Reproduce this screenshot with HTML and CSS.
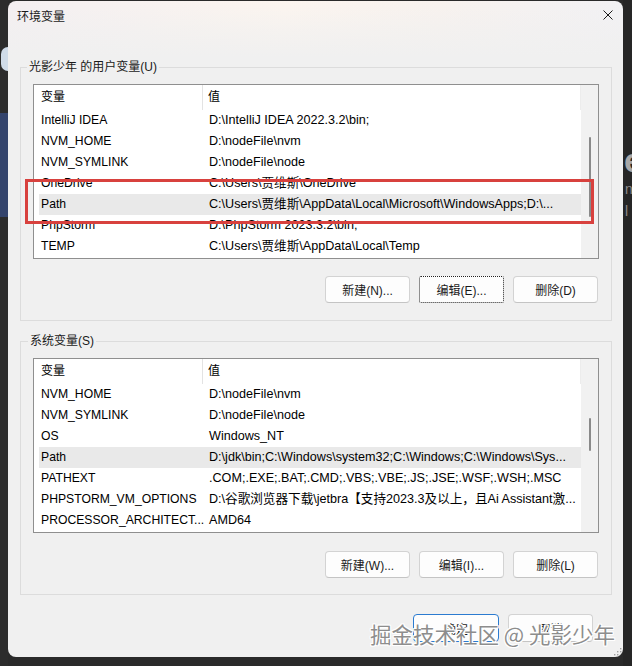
FILE: index.html
```html
<!DOCTYPE html>
<html lang="zh-CN">
<head>
<meta charset="utf-8">
<title>环境变量</title>
<link rel="stylesheet" href="styles.css">
</head>
<body>
<div class="desk">
  <div class="edge-left">
    <div class="edge-icon"></div>
    <div class="edge-blue"></div>
  </div>
  <div class="window">
    <div class="titlebar">
      <span class="title">环境变量</span>
      <svg class="close" width="10" height="10" viewBox="0 0 10 10"><path d="M0.5 0.5L9.5 9.5M9.5 0.5L0.5 9.5" stroke="#1a1a1a" stroke-width="1" fill="none"/></svg>
    </div>
    <div class="main">
      <fieldset class="group">
        <legend>光影少年 的用户变量(U)</legend>
        <div class="list">
          <div class="list-body">
            <div class="head"><div class="c1">变量</div><div class="c2">值</div></div>
            <div class="row"><div class="c1">IntelliJ IDEA</div><div class="c2">D:\IntelliJ IDEA 2022.3.2\bin;</div></div>
            <div class="row"><div class="c1">NVM_HOME</div><div class="c2">D:\nodeFile\nvm</div></div>
            <div class="row"><div class="c1">NVM_SYMLINK</div><div class="c2">D:\nodeFile\node</div></div>
            <div class="row"><div class="c1">OneDrive</div><div class="c2">C:\Users\贾维斯\OneDrive</div></div>
            <div class="row sel"><div class="c1">Path</div><div class="c2">C:\Users\贾维斯\AppData\Local\Microsoft\WindowsApps;D:\...</div></div>
            <div class="row"><div class="c1">PhpStorm</div><div class="c2">D:\PhpStorm 2023.3.2\bin;</div></div>
            <div class="row"><div class="c1">TEMP</div><div class="c2">C:\Users\贾维斯\AppData\Local\Temp</div></div>
          </div>
          <div class="scroll"><div class="thumb thumb-user"></div></div>
        </div>
        <div class="actions">
          <button class="btn">新建(N)...</button>
          <button class="btn focus">编辑(E)...</button>
          <button class="btn">删除(D)</button>
        </div>
      </fieldset>
      <fieldset class="group group-sys">
        <legend>系统变量(S)</legend>
        <div class="list">
          <div class="list-body">
            <div class="head"><div class="c1">变量</div><div class="c2">值</div></div>
            <div class="row"><div class="c1">NVM_HOME</div><div class="c2">D:\nodeFile\nvm</div></div>
            <div class="row"><div class="c1">NVM_SYMLINK</div><div class="c2">D:\nodeFile\node</div></div>
            <div class="row"><div class="c1">OS</div><div class="c2">Windows_NT</div></div>
            <div class="row sel"><div class="c1">Path</div><div class="c2">D:\jdk\bin;C:\Windows\system32;C:\Windows;C:\Windows\Sys...</div></div>
            <div class="row"><div class="c1">PATHEXT</div><div class="c2">.COM;.EXE;.BAT;.CMD;.VBS;.VBE;.JS;.JSE;.WSF;.WSH;.MSC</div></div>
            <div class="row"><div class="c1">PHPSTORM_VM_OPTIONS</div><div class="c2">D:\谷歌浏览器下载\jetbra【支持2023.3及以上，且Ai Assistant激...</div></div>
            <div class="row"><div class="c1">PROCESSOR_ARCHITECT...</div><div class="c2">AMD64</div></div>
          </div>
          <div class="scroll"><div class="thumb thumb-sys"></div></div>
        </div>
        <div class="actions actions-sys">
          <button class="btn">新建(W)...</button>
          <button class="btn">编辑(I)...</button>
          <button class="btn">删除(L)</button>
        </div>
      </fieldset>
    </div>
    <div class="footer">
      <button class="btn btn-ok">确定</button>
      <button class="btn">取消</button>
    </div>
    <div class="redbox"></div>
    <div class="mark">掘金技术社区 @ 光影少年</div>
    <svg class="grip" width="10" height="10" viewBox="0 0 10 10">
      <rect x="8" y="2" width="1.4" height="1.4" fill="#a0a0a0"/>
      <rect x="5" y="5" width="1.4" height="1.4" fill="#a0a0a0"/>
      <rect x="8" y="5" width="1.4" height="1.4" fill="#a0a0a0"/>
      <rect x="2" y="8" width="1.4" height="1.4" fill="#a0a0a0"/>
      <rect x="5" y="8" width="1.4" height="1.4" fill="#a0a0a0"/>
      <rect x="8" y="8" width="1.4" height="1.4" fill="#a0a0a0"/>
    </svg>
  </div>
  <div class="edge-right">
    <div class="bg-big">e</div>
    <div class="bg-small">n</div>
    <div class="bg-small">l</div>
  </div>
</div>
</body>
</html>
```

FILE: styles.css
```css
* { box-sizing: border-box; }
html, body {
  margin: 0;
  padding: 0;
  width: 632px;
  height: 666px;
  overflow: hidden;
  background: #2a2a2a;
  font-family: "Liberation Sans", "Noto Sans CJK SC", sans-serif;
  font-size: 12px;
  color: #000;
}
.desk {
  display: flex;
  width: 632px;
  height: 666px;
}
.edge-left {
  width: 8px;
  flex: none;
  background: #2c2c2c;
  display: flex;
  flex-direction: column;
}
.edge-icon {
  margin-top: 47px;
  height: 24px;
  width: 7px;
  border-radius: 12px 0 0 12px;
  background: #cfdbe8;
  margin-left: 1px;
}
.edge-blue {
  margin-top: 42px;
  height: 104px;
  background: #34446c;
}
.window {
  position: relative;
  width: 615px;
  height: 656px;
  margin-top: 1px;
  flex: none;
  border-radius: 8px;
  background:
    linear-gradient(to bottom, rgba(240,240,240,0) 0, rgba(240,240,240,0.6) 30px, #f0f0f0 56px),
    linear-gradient(90deg, #f4eff1 0%, #fcf5ef 45%, #f8f2ee 70%, #f2f1f4 100%);
  display: flex;
  flex-direction: column;
  overflow: hidden;
}
.titlebar {
  height: 28px;
  flex: none;
  display: flex;
  align-items: center;
  justify-content: space-between;
  padding: 0 10px 0 9px;
}
.title {
  font-size: 12px;
  color: #1a1a1a;
}
.close { display: block; }
.main {
  padding: 30px 11px 0 12px;
}
.group {
  margin: 0;
  padding: 9px 12px 17px 12px;
  border: 1px solid #dcdcdc;
  min-width: 0;
}
.group legend {
  padding: 0 2px;
  margin-left: -6px;
  line-height: 16px;
  height: 16px;
  color: #1a1a1a;
}
.group-sys {
  margin-top: 12px;
  padding-bottom: 16px;
}
.group-sys legend { margin-left: -5px; }
.list {
  display: flex;
  height: 175px;
  border: 1px solid #8f8f8f;
  background: #fff;
  font-size: 12px;
}
.list-body {
  flex: 1;
  min-width: 0;
  overflow: hidden;
}
.head, .row {
  display: flex;
  margin-left: 5px;
}
.head {
  height: 25px;
  line-height: 25px;
}
.row {
  height: 21px;
  line-height: 21px;
}
.c1 {
  width: 165px;
  flex: none;
  padding-left: 2px;
  white-space: nowrap;
  overflow: hidden;
}
.row .c1 { font-size: 12.2px; }
.c2 {
  flex: 1;
  min-width: 0;
  padding-left: 5px;
  white-space: nowrap;
  overflow: hidden;
}
.head .c1 {
  width: 164px;
  border-right: 1px solid #e3e3e3;
}
.head .c2 {
  border-right: 1px solid #ececec;
}
.row .c2 { font-size: 12.6px; }
.row.sel { background: #e9e9e9; }
.scroll {
  width: 17px;
  flex: none;
  background: #f1f1f1;
  position: relative;
}
.thumb {
  position: absolute;
  left: 8px;
  width: 2px;
  background: #8a8a8a;
  border-radius: 1px;
}
.thumb-user { top: 52px; height: 80px; }
.thumb-sys { top: 59px; height: 33px; }
.actions {
  display: flex;
  justify-content: flex-end;
  gap: 9px;
  margin-top: 17px;
  padding-right: 1px;
}
.actions-sys { margin-top: 18px; }
.btn {
  width: 85px;
  height: 27px;
  margin: 0;
  padding: 0;
  font-family: "Liberation Sans", "Noto Sans CJK SC", sans-serif;
  font-size: 12px;
  color: #1a1a1a;
  background: #fdfdfd;
  border: 1px solid #d3d3d3;
  border-bottom-color: #c4c4c4;
  border-radius: 4px;
}
.btn.focus {
  border: 1px dotted #222;
  border-radius: 2px;
}
.footer {
  display: flex;
  justify-content: flex-end;
  gap: 9px;
  margin-top: 19px;
  padding-right: 30px;
}
.footer .btn { height: 28px; }
.btn-ok {
  width: 86px;
  border: 1px solid #2b7bd0;
}
.redbox {
  position: absolute;
  left: 17px;
  top: 178px;
  width: 569px;
  height: 45px;
  border: 3px solid #d8413e;
}
.mark {
  position: absolute;
  left: 362px;
  top: 618px;
  font-family: "Noto Sans CJK SC", sans-serif;
  font-size: 21.5px;
  line-height: 30px;
  color: #8d8d8d;
  white-space: nowrap;
  text-shadow: 1px 0 0 #fff, -1px 0 0 #fff, 0 1px 0 #fff, 0 -1px 0 #fff, 1px 1px 0 #fff, -1px -1px 0 #fff, 1px -1px 0 #fff, -1px 1px 0 #fff;
}
.grip {
  position: absolute;
  right: 1px;
  bottom: 1px;
}
.edge-right {
  width: 9px;
  flex: none;
  background: #262626;
  overflow: hidden;
  padding-top: 142px;
}
.bg-big {
  font-family: "Liberation Sans", sans-serif;
  font-weight: bold;
  font-size: 34px;
  line-height: 36px;
  color: #a8a8a8;
  margin-left: 1px;
}
.bg-small {
  font-family: "Liberation Sans", sans-serif;
  font-size: 14px;
  line-height: 22px;
  color: #8a8a8a;
  margin-left: 2px;
}
.bg-small:first-of-type { margin-top: 30px; }
```
